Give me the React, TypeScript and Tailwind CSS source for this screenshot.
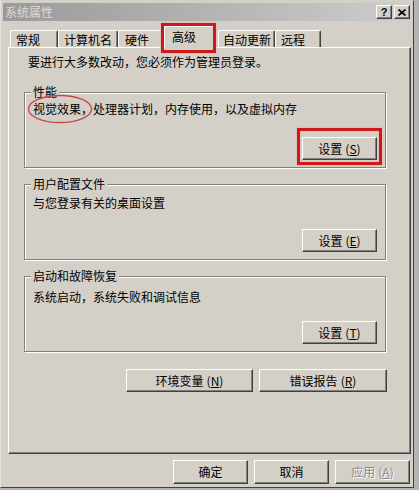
import React from "react";

function Btn({
  children,
  className,
  disabled,
}: {
  children: React.ReactNode;
  className: string;
  disabled?: boolean;
}) {
  return (
    <div
      className={
        "flex items-center justify-center bg-[#d4d0c8] border border-t-white border-l-white border-r-[#404040] border-b-[#404040] shadow-[inset_-1px_-1px_0_#808080] text-[12px] leading-[14px] " +
        (disabled ? "text-[#8a8a8a] [text-shadow:1px_1px_0_#fff] " : "text-black ") +
        className
      }
    >
      {children}
    </div>
  );
}

function Mn({ k }: { k: string }) {
  return (
    <span className="ml-[3px]">
      (<span className="underline underline-offset-1">{k}</span>)
    </span>
  );
}

function Group({
  title,
  text,
  btnKey,
  mtClass,
  textClass,
  highlight,
}: {
  title: string;
  text: React.ReactNode;
  btnKey: string;
  mtClass: string;
  textClass: string;
  highlight?: boolean;
}) {
  return (
    <div
      className={
        "relative w-[362px] h-[76px] border border-[#808080] shadow-[1px_1px_0_#fff,inset_1px_1px_0_#fff] px-[8px] flex flex-col " +
        mtClass
      }
    >
      <span className="absolute left-[6px] top-[-8px] px-[2px] bg-[#d4d0c8] leading-[14px]">
        {title}
      </span>
      <div className={"relative leading-[14px] " + textClass}>{text}</div>
      <div className="mt-auto mb-[7px] flex justify-end">
        <div className="relative">
          <Btn className="w-[75px] h-[23px]">
            设置
            <Mn k={btnKey} />
          </Btn>
          {highlight && (
            <div className="absolute left-[-5px] top-[-9px] w-[85px] h-[37px] border-[3px] border-[#cc1a1a] shadow-[0_0_2px_#f0a0a0,inset_0_0_2px_#f0a0a0] pointer-events-none" />
          )}
        </div>
      </div>
    </div>
  );
}

function Tab({
  label,
  className,
  selected,
}: {
  label: string;
  className: string;
  selected?: boolean;
}) {
  if (selected) {
    return (
      <div
        className={
          "relative z-10 h-[22px] -mb-[1px] bg-[#d4d0c8] border-t border-l border-r border-t-white border-l-white border-r-[#404040] rounded-t-[2px] pt-[3px] leading-[14px] " +
          className
        }
      >
        {label}
        <div className="absolute left-[-4px] top-[-4px] w-[55px] h-[30px] border-[3px] border-[#cc1a1a] shadow-[0_0_2px_#f0a0a0] pointer-events-none" />
      </div>
    );
  }
  return (
    <div
      className={
        "h-[17px] bg-[#d4d0c8] border-t border-l border-r border-t-white border-l-white border-r-[#404040] shadow-[inset_-1px_0_0_#808080] rounded-t-[2px] pt-[2px] leading-[14px] " +
        className
      }
    >
      {label}
    </div>
  );
}

export default function App() {
  return (
    <div className="w-[419px] h-[490px] bg-[#b4b4b4] font-['Noto_Sans_CJK_SC',sans-serif] text-black text-[12px] leading-[14px]">
      <div className="w-[414px] h-[488px] bg-[#d4d0c8] border border-t-[#d4d0c8] border-l-[#e4e4e4] border-r-[#404040] border-b-[#404040] p-[2px] flex flex-col">
        {/* Title bar */}
        <div className="h-[18px] flex items-center bg-linear-to-r from-[#9a9a9a] to-[#cdcdcd] pl-[2px] pr-[1px]">
          <span className="text-[#dedad2] text-[12px] leading-[14px]">系统属性</span>
          <div className="ml-auto flex items-center gap-[2px]">
            <div className="w-[16px] h-[14px] bg-[#d4d0c8] border border-t-white border-l-white border-r-[#404040] border-b-[#404040] shadow-[inset_-1px_-1px_0_#808080] flex items-center justify-center text-[11px] leading-[11px] font-bold font-['Liberation_Sans',sans-serif]">
              ?
            </div>
            <div className="w-[16px] h-[14px] bg-[#d4d0c8] border border-t-white border-l-white border-r-[#404040] border-b-[#404040] shadow-[inset_-1px_-1px_0_#808080] flex items-center justify-center">
              <svg width="8" height="7" viewBox="0 0 8 7">
                <path d="M0.5 0.5 L7.5 6.5 M7.5 0.5 L0.5 6.5" stroke="#000" strokeWidth="1.6" />
              </svg>
            </div>
          </div>
        </div>

        {/* Tabs */}
        <div className="h-[26px] flex items-end pl-[7px]">
          <Tab label="常规" className="w-[48px] pl-[5px]" />
          <Tab label="计算机名" className="w-[60px] pl-[5px]" />
          <Tab label="硬件" className="w-[45px] pl-[6px]" />
          <Tab label="高级" className="ml-[1px] w-[50px] pl-[7px]" selected />
          <Tab label="自动更新" className="ml-[4px] w-[57px] pl-[4px]" />
          <Tab label="远程" className="w-[46px] pl-[5px]" />
        </div>

        {/* Panel */}
        <div className="ml-[5px] w-[403px] h-[407px] border border-t-white border-l-white border-r-[#404040] border-b-[#404040] shadow-[inset_-1px_-1px_0_#808080] pl-[15px] flex flex-col">
          <p className="pt-[7px] pl-[4px] leading-[14px]">要进行大多数改动，您必须作为管理员登录。</p>

          <Group
            title="性能"
            mtClass="mt-[23px]"
            textClass="mt-[9px]"
            btnKey="S"
            highlight
            text={
              <>
                视觉效果，处理器计划，内存使用，以及虚拟内存
                <svg
                  className="absolute left-[-6px] top-[-8px] pointer-events-none"
                  width="66"
                  height="30"
                  viewBox="0 0 66 30"
                >
                  <ellipse cx="33" cy="15" rx="31.5" ry="13.5" fill="none" stroke="#c84848" strokeWidth="1.3" />
                </svg>
              </>
            }
          />

          <Group
            title="用户配置文件"
            mtClass="mt-[16px]"
            textClass="mt-[11px]"
            btnKey="E"
            text="与您登录有关的桌面设置"
          />

          <Group
            title="启动和故障恢复"
            mtClass="mt-[16px]"
            textClass="mt-[13px]"
            btnKey="T"
            text="系统启动，系统失败和调试信息"
          />

          <div className="mt-[17px] ml-[102px] flex gap-[6px]">
            <Btn className="w-[127px] h-[23px]">
              环境变量
              <Mn k="N" />
            </Btn>
            <Btn className="w-[128px] h-[23px]">
              错误报告
              <Mn k="R" />
            </Btn>
          </div>
        </div>

        {/* Bottom buttons */}
        <div className="mt-[6px] ml-[170px] flex gap-[6px]">
          <Btn className="w-[75px] h-[24px]">确定</Btn>
          <Btn className="w-[75px] h-[24px]">取消</Btn>
          <Btn className="w-[75px] h-[24px]" disabled>
            应用
            <Mn k="A" />
          </Btn>
        </div>
      </div>
    </div>
  );
}
